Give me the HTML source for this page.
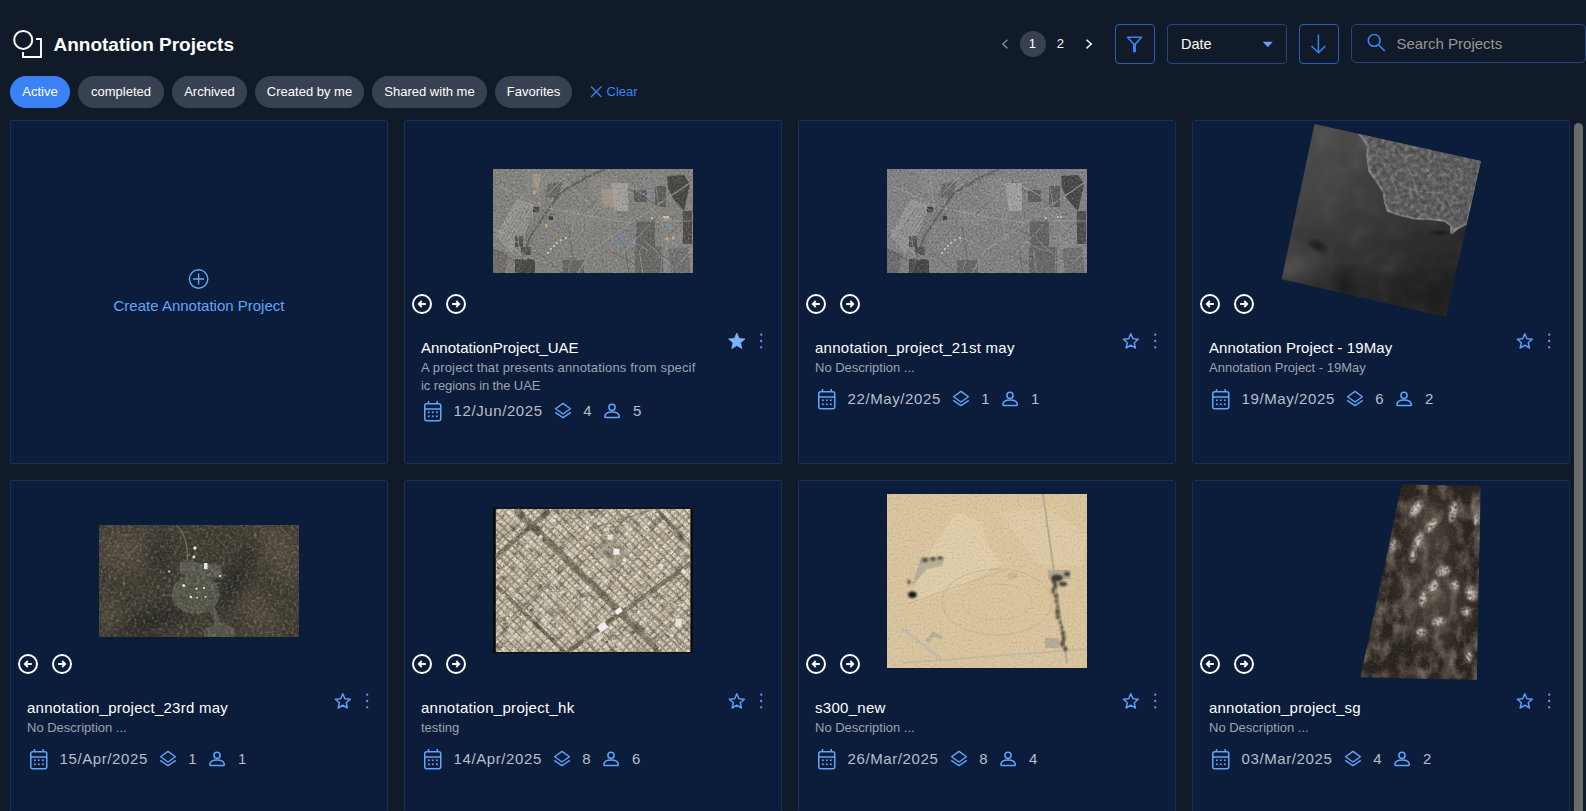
<!DOCTYPE html>
<html><head><meta charset="utf-8"><title>Annotation Projects</title>
<style>
html,body{margin:0;padding:0;}
body{width:1586px;height:811px;overflow:hidden;background:#101a28;font-family:"Liberation Sans", sans-serif;position:relative;}
</style></head><body>
<svg style="position:absolute;left:0;top:0" width="60" height="70" viewBox="0 0 60 70">
<circle cx="23.2" cy="39.9" r="9" fill="none" stroke="#fff" stroke-width="2"/>
<path d="M23 52 V57 H41 V39 H36" fill="none" stroke="#fff" stroke-width="1.9" stroke-linejoin="round"/>
</svg>
<div style="position:absolute;left:53.5px;top:34.52px;font-size:19px;line-height:19px;color:#fff;font-weight:700;letter-spacing:0px;white-space:nowrap;">Annotation Projects</div>
<div style="position:absolute;left:10px;top:76px;width:60px;height:32px;border-radius:16px;background:#3b82f6"></div>
<div style="position:absolute;left:10px;top:76px;width:60px;height:32px;"><div style="position:absolute;left:0;right:0;top:8.70px;text-align:center;font-size:13px;line-height:13px;color:#fff;white-space:nowrap">Active</div></div>
<div style="position:absolute;left:78px;top:76px;width:86px;height:32px;border-radius:16px;background:#374151"></div>
<div style="position:absolute;left:78px;top:76px;width:86px;height:32px;"><div style="position:absolute;left:0;right:0;top:8.70px;text-align:center;font-size:13px;line-height:13px;color:#fff;white-space:nowrap">completed</div></div>
<div style="position:absolute;left:172px;top:76px;width:75px;height:32px;border-radius:16px;background:#374151"></div>
<div style="position:absolute;left:172px;top:76px;width:75px;height:32px;"><div style="position:absolute;left:0;right:0;top:8.70px;text-align:center;font-size:13px;line-height:13px;color:#fff;white-space:nowrap">Archived</div></div>
<div style="position:absolute;left:255px;top:76px;width:109px;height:32px;border-radius:16px;background:#374151"></div>
<div style="position:absolute;left:255px;top:76px;width:109px;height:32px;"><div style="position:absolute;left:0;right:0;top:8.70px;text-align:center;font-size:13px;line-height:13px;color:#fff;white-space:nowrap">Created by me</div></div>
<div style="position:absolute;left:372px;top:76px;width:115px;height:32px;border-radius:16px;background:#374151"></div>
<div style="position:absolute;left:372px;top:76px;width:115px;height:32px;"><div style="position:absolute;left:0;right:0;top:8.70px;text-align:center;font-size:13px;line-height:13px;color:#fff;white-space:nowrap">Shared with me</div></div>
<div style="position:absolute;left:495px;top:76px;width:77px;height:32px;border-radius:16px;background:#374151"></div>
<div style="position:absolute;left:495px;top:76px;width:77px;height:32px;"><div style="position:absolute;left:0;right:0;top:8.70px;text-align:center;font-size:13px;line-height:13px;color:#fff;white-space:nowrap">Favorites</div></div>
<svg style="position:absolute;left:585px;top:80px" width="22" height="24" viewBox="585 80 22 24">
<path d="M591 86.5 L601.5 97 M601.5 86.5 L591 97" stroke="#3b82f6" stroke-width="1.3"/></svg>
<div style="position:absolute;left:606.5px;top:84.70px;font-size:13px;line-height:13px;color:#3b82f6;font-weight:400;letter-spacing:0px;white-space:nowrap;">Clear</div>
<div style="position:absolute;left:1020px;top:31px;width:26px;height:26px;border-radius:13px;background:#374151"></div>
<svg style="position:absolute;left:995px;top:30px" width="105" height="30" viewBox="995 30 105 30">
<path d="M1007.5 39.7 L1002.8 44 L1007.5 48.4" fill="none" stroke="#7b8190" stroke-width="1.5"/>
<path d="M1086.5 39.7 L1091.2 44 L1086.5 48.4" fill="none" stroke="#fff" stroke-width="1.5"/>
</svg>
<div style="position:absolute;left:1028.8px;top:37.40px;font-size:13px;line-height:13px;color:#fff;font-weight:400;letter-spacing:0px;white-space:nowrap;">1</div>
<div style="position:absolute;left:1056.8px;top:37.40px;font-size:13px;line-height:13px;color:#fff;font-weight:400;letter-spacing:0px;white-space:nowrap;">2</div>
<div style="position:absolute;left:1115px;top:24px;width:38px;height:38px;border:1px solid #2a5fb8;border-radius:4px"></div>
<svg style="position:absolute;left:1115px;top:24px" width="40" height="40" viewBox="1115 24 40 40">
<path d="M1127.5 37.3 H1141.5 L1134.5 45 Z" fill="none" stroke="#3b82f6" stroke-width="1.6" stroke-linejoin="round"/>
<path d="M1134.5 45 V51" stroke="#3b82f6" stroke-width="3" stroke-linecap="round"/>
</svg>
<div style="position:absolute;left:1167px;top:24px;width:118px;height:38px;border:1px solid #27477a;border-radius:4px"></div>
<div style="position:absolute;left:1181px;top:37.23px;font-size:14.5px;line-height:14.5px;color:#fff;font-weight:400;letter-spacing:0px;white-space:nowrap;">Date</div>
<svg style="position:absolute;left:1260px;top:38px" width="16" height="12" viewBox="1260 38 16 12">
<path d="M1262.8 41.8 H1272.8 L1267.8 47.2 Z" fill="#60a5fa"/></svg>
<div style="position:absolute;left:1299px;top:24px;width:38px;height:38px;border:1px solid #2a5fb8;border-radius:4px"></div>
<svg style="position:absolute;left:1299px;top:24px" width="40" height="40" viewBox="1299 24 40 40">
<path d="M1318.4 34.4 V52.5 M1311.5 46 L1318.4 52.8 L1325.3 46" fill="none" stroke="#3b82f6" stroke-width="1.5"/>
</svg>
<div style="position:absolute;left:1351px;top:24px;width:233px;height:37px;border:1px solid #27477a;border-radius:5px"></div>
<svg style="position:absolute;left:1360px;top:28px" width="32" height="30" viewBox="1360 28 32 30">
<circle cx="1374.2" cy="40.4" r="5.9" fill="none" stroke="#3b82f6" stroke-width="1.6"/>
<path d="M1378.5 44.7 L1384.8 51" stroke="#3b82f6" stroke-width="1.6"/>
</svg>
<div style="position:absolute;left:1396.4px;top:36.20px;font-size:15px;line-height:15px;color:#979797;font-weight:400;letter-spacing:0px;white-space:nowrap;">Search Projects</div>
<div style="position:absolute;left:1574px;top:123px;width:9px;height:700px;border-radius:4.5px;background:#6b6b6b"></div>
<div style="position:absolute;left:10px;top:120px;width:376px;height:342px;background:#0c1c3b;border:1px solid #1a3053;border-radius:2.5px"></div>
<svg style="position:absolute;left:180px;top:260px" width="40" height="40" viewBox="180 260 40 40">
<circle cx="198.6" cy="279" r="9.2" fill="none" stroke="#60a5fa" stroke-width="1.4"/>
<path d="M198.6 273.5 V284.5 M193.1 279 H204.1" stroke="#60a5fa" stroke-width="1.4"/></svg>
<div style="position:absolute;left:10px;width:378px;top:298.00px;text-align:center;font-size:15px;line-height:15px;color:#60a5fa;white-space:nowrap">Create Annotation Project</div>
<div style="position:absolute;left:404px;top:120px;width:376px;height:342px;background:#0c1c3b;border:1px solid #1a3053;border-radius:2.5px"></div>
<svg style="position:absolute;left:493px;top:169px" width="200" height="104" viewBox="493 169 200 104"><defs><filter id="tx493" x="0" y="0" width="100%" height="100%" color-interpolation-filters="sRGB"><feTurbulence type="fractalNoise" baseFrequency="0.5" numOctaves="2" seed="7" result="n"/><feColorMatrix in="n" type="matrix" values="0.167 0.167 0.167 0 0.250  0.167 0.167 0.167 0 0.250  0.167 0.167 0.167 0 0.250  0 0 0 0 1" result="g"/><feBlend in="g" in2="SourceGraphic" mode="hard-light" result="b"/><feComposite in="b" in2="SourceGraphic" operator="in"/></filter></defs><g filter="url(#tx493)"><rect x="493" y="169" width="200" height="104" fill="rgb(131,129,126)"/><polygon points="517.0,199.0 535.0,205.0 524.0,236.0 511.0,253.0 496.0,236.0" fill="rgb(152,150,147)" opacity="0.9"/><polygon points="591.0,178.0 617.0,178.0 617.0,220.0 593.0,209.0" fill="rgb(142,140,137)" opacity="0.6"/><polygon points="611.0,183.0 628.0,183.0 628.0,211.0 615.0,211.0" fill="rgb(167,165,162)" opacity="0.8"/><polygon points="565.0,209.0 594.0,209.0 594.0,226.0 565.0,226.0" fill="rgb(140,138,135)" opacity="0.6"/><polygon points="643.0,174.0 668.0,174.0 665.0,209.0 643.0,199.0" fill="rgb(137,135,132)" opacity="0.5"/><polygon points="665.0,224.0 693.0,224.0 693.0,273.0 663.0,273.0" fill="rgb(142,140,137)" opacity="0.5"/><polygon points="523.0,169.0 573.0,169.0 563.0,189.0 528.0,194.0" fill="rgb(142,140,137)" opacity="0.5"/><polygon points="667.0,176.0 684.0,175.0 690.0,184.0 684.0,211.0 674.0,200.0 668.0,188.0" fill="rgb(74,72,69)" opacity="1"/><polygon points="683.0,211.0 692.0,211.0 692.0,244.0 683.0,244.0" fill="rgb(80,78,75)" opacity="1"/><polygon points="655.0,186.0 666.0,186.0 666.0,207.0 655.0,207.0" fill="rgb(92,90,87)" opacity="0.9"/><polygon points="636.0,220.0 655.0,220.0 655.0,247.0 636.0,247.0" fill="rgb(97,95,92)" opacity="0.9"/><polygon points="634.0,190.0 647.0,190.0 647.0,202.0 634.0,202.0" fill="rgb(92,90,87)" opacity="0.9"/><polygon points="635.0,247.0 663.0,247.0 663.0,273.0 635.0,273.0" fill="rgb(100,98,95)" opacity="0.8"/><polygon points="515.0,236.0 523.0,236.0 523.0,247.0 515.0,247.0" fill="rgb(82,80,77)" opacity="1"/><polygon points="521.0,247.0 531.0,247.0 531.0,255.0 521.0,255.0" fill="rgb(86,84,81)" opacity="1"/><polygon points="515.0,259.0 535.0,259.0 535.0,273.0 515.0,273.0" fill="rgb(74,72,69)" opacity="1"/><polygon points="533.0,207.0 539.0,207.0 539.0,212.0 533.0,212.0" fill="rgb(62,60,57)" opacity="1"/><polygon points="549.0,216.0 553.0,216.0 553.0,220.0 549.0,220.0" fill="rgb(64,62,59)" opacity="1"/><polygon points="563.0,260.0 584.0,260.0 584.0,273.0 563.0,273.0" fill="rgb(97,95,92)" opacity="0.8"/><polygon points="493.0,249.0 508.0,254.0 505.0,273.0 493.0,273.0" fill="rgb(102,100,97)" opacity="0.7"/><polygon points="548.0,184.0 563.0,181.0 558.0,199.0 545.0,197.0" fill="rgb(97,95,92)" opacity="0.7"/><polygon points="668.0,249.0 688.0,247.0 691.0,273.0 671.0,273.0" fill="rgb(102,100,97)" opacity="0.6"/><path d="M517.0 273.0 L530.6 236.0 L546.6 212.0 L560.0 193.0 L584.0 178.6 L605.0 169.0" stroke="rgb(94,92,89)" stroke-width="2.2" fill="none" opacity="0.85"/><path d="M500.0 186.6 L546.6 208.0 L594.5 217.0 L631.0 223.0" stroke="rgb(152,150,147)" stroke-width="1.3" fill="none" opacity="0.85"/><path d="M692.0 181.6 L631.0 223.0 L591.0 251.0 L578.0 273.0" stroke="rgb(147,145,142)" stroke-width="1.5" fill="none" opacity="0.85"/><path d="M636.0 221.0 L692.0 221.0" stroke="rgb(152,150,147)" stroke-width="1.2" fill="none" opacity="0.85"/><path d="M653.0 169.0 L663.0 229.0 L661.0 273.0" stroke="rgb(142,140,137)" stroke-width="1" fill="none" opacity="0.85"/><path d="M493.0 224.0 L523.0 239.0" stroke="rgb(142,140,137)" stroke-width="1" fill="none" opacity="0.85"/><path d="M593.0 169.0 L585.0 219.0 L568.0 273.0" stroke="rgb(140,138,135)" stroke-width="1" fill="none" opacity="0.85"/><path d="M538.3 252.1 L564.0 275.1" stroke="rgb(102,100,97)" stroke-width="1" opacity="0.8"/><path d="M613.1 252.2 L639.4 266.6" stroke="rgb(102,100,97)" stroke-width="1" opacity="0.8"/><path d="M492.8 249.0 L521.6 264.9" stroke="rgb(97,95,92)" stroke-width="1" opacity="0.8"/><path d="M515.3 220.4 L521.2 259.9" stroke="rgb(152,150,147)" stroke-width="1" opacity="0.8"/><path d="M493.8 242.7 L526.1 260.5" stroke="rgb(152,150,147)" stroke-width="1" opacity="0.8"/><path d="M639.4 250.8 L644.5 284.7" stroke="rgb(152,150,147)" stroke-width="1" opacity="0.8"/><path d="M650.7 208.5 L675.3 230.7" stroke="rgb(162,160,157)" stroke-width="1" opacity="0.8"/><path d="M624.9 246.6 L629.4 276.2" stroke="rgb(97,95,92)" stroke-width="1" opacity="0.8"/><path d="M642.2 238.8 L671.6 265.3" stroke="rgb(157,155,152)" stroke-width="1" opacity="0.8"/><path d="M569.2 238.3 L592.9 251.3" stroke="rgb(152,150,147)" stroke-width="1" opacity="0.8"/><path d="M519.1 200.7 L538.7 211.4" stroke="rgb(152,150,147)" stroke-width="1" opacity="0.8"/><path d="M562.6 174.0 L581.7 191.2" stroke="rgb(102,100,97)" stroke-width="1" opacity="0.8"/><path d="M663.5 238.2 L677.2 245.7" stroke="rgb(157,155,152)" stroke-width="1" opacity="0.8"/><path d="M568.1 224.9 L573.8 262.6" stroke="rgb(97,95,92)" stroke-width="1" opacity="0.8"/><path d="M505.8 244.3 L536.9 261.4" stroke="rgb(152,150,147)" stroke-width="1" opacity="0.8"/><path d="M631.3 241.0 L648.0 250.2" stroke="rgb(152,150,147)" stroke-width="1" opacity="0.8"/><path d="M622.4 228.2 L645.7 241.0" stroke="rgb(102,100,97)" stroke-width="1" opacity="0.8"/><path d="M624.7 184.0 L650.4 198.1" stroke="rgb(162,160,157)" stroke-width="1" opacity="0.8"/><path d="M557.4 252.5 L572.3 236.9" stroke="rgb(152,150,147)" stroke-width="1" opacity="0.8"/><path d="M519.3 236.5 L532.5 243.8" stroke="rgb(102,100,97)" stroke-width="1" opacity="0.8"/><path d="M494.7 229.3 L518.9 242.6" stroke="rgb(162,160,157)" stroke-width="1" opacity="0.8"/><path d="M676.9 265.7 L697.6 244.0" stroke="rgb(162,160,157)" stroke-width="1" opacity="0.8"/><path d="M510.2 209.8 L526.4 192.8" stroke="rgb(152,150,147)" stroke-width="1" opacity="0.8"/><path d="M668.3 236.3 L693.0 210.3" stroke="rgb(97,95,92)" stroke-width="1" opacity="0.8"/><path d="M547.4 195.1 L566.5 175.1" stroke="rgb(162,160,157)" stroke-width="1" opacity="0.8"/><path d="M535.1 173.6 L540.2 207.5" stroke="rgb(157,155,152)" stroke-width="1" opacity="0.8"/><path d="M627.0 188.4 L654.3 203.4" stroke="rgb(102,100,97)" stroke-width="1" opacity="0.8"/><path d="M565.5 182.3 L590.5 204.8" stroke="rgb(162,160,157)" stroke-width="1" opacity="0.8"/><path d="M569.7 227.6 L587.5 243.6" stroke="rgb(152,150,147)" stroke-width="1" opacity="0.8"/><path d="M584.1 169.6 L586.1 182.7" stroke="rgb(97,95,92)" stroke-width="1" opacity="0.8"/><path d="M520.9 209.8 L541.3 228.2" stroke="rgb(152,150,147)" stroke-width="1" opacity="0.8"/><path d="M545.4 220.0 L556.3 208.5" stroke="rgb(97,95,92)" stroke-width="1" opacity="0.8"/><path d="M559.6 192.7 L573.8 177.8" stroke="rgb(162,160,157)" stroke-width="1" opacity="0.8"/><path d="M550.1 197.8 L552.3 212.5" stroke="rgb(157,155,152)" stroke-width="1" opacity="0.8"/><path d="M608.3 217.7 L611.8 241.6" stroke="rgb(152,150,147)" stroke-width="1" opacity="0.8"/><path d="M511.1 245.5 L526.7 259.6" stroke="rgb(162,160,157)" stroke-width="1" opacity="0.8"/><path d="M657.0 253.0 L689.9 271.1" stroke="rgb(102,100,97)" stroke-width="1" opacity="0.8"/><path d="M581.3 215.5 L596.3 199.8" stroke="rgb(102,100,97)" stroke-width="1" opacity="0.8"/><path d="M623.5 252.2 L649.8 224.5" stroke="rgb(162,160,157)" stroke-width="1" opacity="0.8"/><path d="M531.0 203.2 L533.0 216.6" stroke="rgb(162,160,157)" stroke-width="1" opacity="0.8"/><path d="M499.0 244.0 L521.0 209.0" stroke="rgb(107,105,102)" stroke-width="0.8" opacity="0.6"/><path d="M503.5 243.0 L525.5 208.0" stroke="rgb(107,105,102)" stroke-width="0.8" opacity="0.6"/><path d="M508.0 242.0 L530.0 207.0" stroke="rgb(107,105,102)" stroke-width="0.8" opacity="0.6"/><path d="M512.5 241.0 L534.5 206.0" stroke="rgb(107,105,102)" stroke-width="0.8" opacity="0.6"/><path d="M517.0 240.0 L539.0 205.0" stroke="rgb(107,105,102)" stroke-width="0.8" opacity="0.6"/><path d="M521.5 239.0 L543.5 204.0" stroke="rgb(107,105,102)" stroke-width="0.8" opacity="0.6"/><path d="M526.0 238.0 L548.0 203.0" stroke="rgb(107,105,102)" stroke-width="0.8" opacity="0.6"/><path d="M530.5 237.0 L552.5 202.0" stroke="rgb(107,105,102)" stroke-width="0.8" opacity="0.6"/></g><polygon points="601.0,189.0 618.0,189.0 615.0,207.0 603.0,205.0" fill="#b3a28a" opacity="0.55"/><polygon points="533.0,174.0 541.0,174.0 539.0,189.0 533.0,187.0" fill="#b3a28a" opacity="0.5"/><rect x="619" y="235" width="3" height="3" fill="#5d9ad8" opacity="0.6"/><rect x="622" y="239" width="4" height="3" fill="#5d9ad8" opacity="0.6"/><rect x="617" y="243" width="3" height="4" fill="#5d9ad8" opacity="0.6"/><rect x="624" y="232" width="2" height="3" fill="#5d9ad8" opacity="0.6"/><rect x="648" y="191" width="2.5" height="3" fill="#5d9ad8" opacity="0.6"/><rect x="655" y="181" width="2.5" height="3" fill="#5d9ad8" opacity="0.6"/><rect x="668" y="225" width="3" height="3" fill="#5d9ad8" opacity="0.6"/><rect x="658" y="255" width="2" height="3" fill="#5d9ad8" opacity="0.6"/><rect x="635" y="229" width="2" height="2" fill="#5d9ad8" opacity="0.6"/><rect x="553" y="209" width="2" height="2" fill="#5d9ad8" opacity="0.6"/><rect x="513" y="189" width="2" height="2" fill="#5d9ad8" opacity="0.6"/><rect x="643" y="193" width="2" height="2" fill="#5d9ad8" opacity="0.6"/><rect x="629" y="241" width="2" height="2" fill="#5d9ad8" opacity="0.6"/><rect x="664" y="216" width="2.5" height="3.5" fill="#d8b878" opacity="0.7"/><rect x="667" y="216" width="2.5" height="3.5" fill="#d8b878" opacity="0.7"/><rect x="666" y="237" width="2.5" height="3.5" fill="#d8b878" opacity="0.7"/><rect x="672" y="236" width="2.5" height="3.5" fill="#d8b878" opacity="0.7"/><rect x="533" y="191" width="2.5" height="3.5" fill="#d8b878" opacity="0.7"/><rect x="545" y="224" width="2.5" height="3.5" fill="#d8b878" opacity="0.7"/><circle cx="548" cy="253" r="1.1" fill="#d8d8d0" opacity="0.85"/><circle cx="551" cy="249" r="1.1" fill="#d8d8d0" opacity="0.85"/><circle cx="554" cy="246" r="1.1" fill="#d8d8d0" opacity="0.85"/><circle cx="557" cy="243" r="1.1" fill="#d8d8d0" opacity="0.85"/><circle cx="561" cy="240" r="1.1" fill="#d8d8d0" opacity="0.85"/><circle cx="566" cy="238" r="1.1" fill="#d8d8d0" opacity="0.85"/><circle cx="652" cy="218" r="1.1" fill="#d8d8d0" opacity="0.85"/><circle cx="664" cy="217" r="1.1" fill="#d8d8d0" opacity="0.85"/><circle cx="667" cy="217" r="1.1" fill="#d8d8d0" opacity="0.85"/></svg>
<svg style="position:absolute;left:404px;top:290px" width="70" height="30" viewBox="404 290 70 30">
<circle cx="422" cy="304" r="9" fill="none" stroke="#fff" stroke-width="2"/>
<path d="M425.8 304 H418.8 M421.8 301 L418.8 304 L421.8 307" fill="none" stroke="#fff" stroke-width="1.8"/>
<circle cx="456" cy="304" r="9" fill="none" stroke="#fff" stroke-width="2"/>
<path d="M452.2 304 H459.2 M456.2 301 L459.2 304 L456.2 307" fill="none" stroke="#fff" stroke-width="1.8"/>
</svg>
<svg style="position:absolute;left:724px;top:325px" width="50" height="32" viewBox="724 325 50 32"><path d="M736.80 333.00 L739.09 338.44 L744.98 338.94 L740.51 342.81 L741.85 348.56 L736.80 345.50 L731.75 348.56 L733.09 342.81 L728.62 338.94 L734.51 338.44 Z" fill="#7cb3f7" stroke="#7cb3f7" stroke-width="0.8" stroke-linejoin="round"/><circle cx="761.2" cy="334.7" r="1.15" fill="#5c9cf5"/><circle cx="761.2" cy="341" r="1.15" fill="#5c9cf5"/><circle cx="761.2" cy="347.3" r="1.15" fill="#5c9cf5"/></svg>
<div style="position:absolute;left:421px;top:339.70px;font-size:15px;line-height:15px;color:#fff;font-weight:400;letter-spacing:0px;white-space:nowrap;">AnnotationProject_UAE</div>
<div style="position:absolute;left:421px;top:360.60px;font-size:13px;line-height:13px;color:#9ca3af;font-weight:400;letter-spacing:0.15px;white-space:nowrap;">A project that presents annotations from specif</div>
<div style="position:absolute;left:421px;top:378.60px;font-size:13px;line-height:13px;color:#9ca3af;font-weight:400;letter-spacing:-0.1px;white-space:nowrap;">ic regions in the UAE</div>
<svg style="position:absolute;left:419px;top:397px" width="30" height="26" viewBox="419 397 30 26">
<rect x="424.75" y="403.75" width="16" height="17" rx="2" fill="none" stroke="#60a5fa" stroke-width="1.5"/>
<path d="M424.75 409 H440.75 M428.5 401 V404 M437.2 401 V404" stroke="#60a5fa" stroke-width="1.5"/>
<rect x="428" y="411.4" width="1.7" height="1.7" fill="#60a5fa"/><rect x="428" y="415.4" width="1.7" height="1.7" fill="#60a5fa"/><rect x="431.9" y="411.4" width="1.7" height="1.7" fill="#60a5fa"/><rect x="431.9" y="415.4" width="1.7" height="1.7" fill="#60a5fa"/><rect x="436" y="411.4" width="1.7" height="1.7" fill="#60a5fa"/><rect x="436" y="415.4" width="1.7" height="1.7" fill="#60a5fa"/></svg>
<div style="position:absolute;left:453.5px;top:403.30px;font-size:15px;line-height:15px;color:#b8bfca;font-weight:400;letter-spacing:0.6px;white-space:nowrap;">12/Jun/2025</div>
<svg style="position:absolute;left:552.0px;top:400px" width="22" height="24" viewBox="552.0 400 22 24">
<path d="M563.0 403.4 L570.4 408.7 L563.0 414 L555.6 408.7 Z" fill="none" stroke="#60a5fa" stroke-width="1.4" stroke-linejoin="round"/>
<path d="M555.2 412.3 L563.0 417.7 L570.8 412.3" fill="none" stroke="#60a5fa" stroke-width="1.4" stroke-linejoin="round"/>
</svg>
<div style="position:absolute;left:583.2px;top:403.30px;font-size:15px;line-height:15px;color:#b8bfca;font-weight:400;letter-spacing:0px;white-space:nowrap;">4</div>
<svg style="position:absolute;left:602.1000000000001px;top:401px" width="22" height="22" viewBox="602.1000000000001 401 22 22">
<circle cx="612.1000000000001" cy="407.3" r="3.1" fill="none" stroke="#60a5fa" stroke-width="1.5"/>
<path d="M605.0000000000001 416.8 C605.0000000000001 413.4 608.1000000000001 412 612.1000000000001 412 C616.1000000000001 412 619.4000000000001 413.4 619.4000000000001 416.8 Q619.4000000000001 417.6 618.6000000000001 417.6 H605.8000000000002 Q605.0000000000001 417.6 605.0000000000001 416.8 Z" fill="none" stroke="#60a5fa" stroke-width="1.5"/>
</svg>
<div style="position:absolute;left:632.9000000000001px;top:403.30px;font-size:15px;line-height:15px;color:#b8bfca;font-weight:400;letter-spacing:0px;white-space:nowrap;">5</div>
<div style="position:absolute;left:798px;top:120px;width:376px;height:342px;background:#0c1c3b;border:1px solid #1a3053;border-radius:2.5px"></div>
<svg style="position:absolute;left:887px;top:169px" width="200" height="104" viewBox="887 169 200 104"><defs><filter id="tx887" x="0" y="0" width="100%" height="100%" color-interpolation-filters="sRGB"><feTurbulence type="fractalNoise" baseFrequency="0.5" numOctaves="2" seed="7" result="n"/><feColorMatrix in="n" type="matrix" values="0.167 0.167 0.167 0 0.250  0.167 0.167 0.167 0 0.250  0.167 0.167 0.167 0 0.250  0 0 0 0 1" result="g"/><feBlend in="g" in2="SourceGraphic" mode="hard-light" result="b"/><feComposite in="b" in2="SourceGraphic" operator="in"/></filter></defs><g filter="url(#tx887)"><rect x="887" y="169" width="200" height="104" fill="rgb(129,129,129)"/><polygon points="911.0,199.0 929.0,205.0 918.0,236.0 905.0,253.0 890.0,236.0" fill="rgb(150,150,150)" opacity="0.9"/><polygon points="985.0,178.0 1011.0,178.0 1011.0,220.0 987.0,209.0" fill="rgb(140,140,140)" opacity="0.6"/><polygon points="1005.0,183.0 1022.0,183.0 1022.0,211.0 1009.0,211.0" fill="rgb(165,165,165)" opacity="0.8"/><polygon points="959.0,209.0 988.0,209.0 988.0,226.0 959.0,226.0" fill="rgb(138,138,138)" opacity="0.6"/><polygon points="1037.0,174.0 1062.0,174.0 1059.0,209.0 1037.0,199.0" fill="rgb(135,135,135)" opacity="0.5"/><polygon points="1059.0,224.0 1087.0,224.0 1087.0,273.0 1057.0,273.0" fill="rgb(140,140,140)" opacity="0.5"/><polygon points="917.0,169.0 967.0,169.0 957.0,189.0 922.0,194.0" fill="rgb(140,140,140)" opacity="0.5"/><polygon points="1061.0,176.0 1078.0,175.0 1084.0,184.0 1078.0,211.0 1068.0,200.0 1062.0,188.0" fill="rgb(72,72,72)" opacity="1"/><polygon points="1077.0,211.0 1086.0,211.0 1086.0,244.0 1077.0,244.0" fill="rgb(78,78,78)" opacity="1"/><polygon points="1049.0,186.0 1060.0,186.0 1060.0,207.0 1049.0,207.0" fill="rgb(90,90,90)" opacity="0.9"/><polygon points="1030.0,220.0 1049.0,220.0 1049.0,247.0 1030.0,247.0" fill="rgb(95,95,95)" opacity="0.9"/><polygon points="1028.0,190.0 1041.0,190.0 1041.0,202.0 1028.0,202.0" fill="rgb(90,90,90)" opacity="0.9"/><polygon points="1029.0,247.0 1057.0,247.0 1057.0,273.0 1029.0,273.0" fill="rgb(98,98,98)" opacity="0.8"/><polygon points="909.0,236.0 917.0,236.0 917.0,247.0 909.0,247.0" fill="rgb(80,80,80)" opacity="1"/><polygon points="915.0,247.0 925.0,247.0 925.0,255.0 915.0,255.0" fill="rgb(84,84,84)" opacity="1"/><polygon points="909.0,259.0 929.0,259.0 929.0,273.0 909.0,273.0" fill="rgb(72,72,72)" opacity="1"/><polygon points="927.0,207.0 933.0,207.0 933.0,212.0 927.0,212.0" fill="rgb(60,60,60)" opacity="1"/><polygon points="943.0,216.0 947.0,216.0 947.0,220.0 943.0,220.0" fill="rgb(62,62,62)" opacity="1"/><polygon points="957.0,260.0 978.0,260.0 978.0,273.0 957.0,273.0" fill="rgb(95,95,95)" opacity="0.8"/><polygon points="887.0,249.0 902.0,254.0 899.0,273.0 887.0,273.0" fill="rgb(100,100,100)" opacity="0.7"/><polygon points="942.0,184.0 957.0,181.0 952.0,199.0 939.0,197.0" fill="rgb(95,95,95)" opacity="0.7"/><polygon points="1062.0,249.0 1082.0,247.0 1085.0,273.0 1065.0,273.0" fill="rgb(100,100,100)" opacity="0.6"/><path d="M911.0 273.0 L924.6 236.0 L940.6 212.0 L954.0 193.0 L978.0 178.6 L999.0 169.0" stroke="rgb(92,92,92)" stroke-width="2.2" fill="none" opacity="0.85"/><path d="M894.0 186.6 L940.6 208.0 L988.5 217.0 L1025.0 223.0" stroke="rgb(150,150,150)" stroke-width="1.3" fill="none" opacity="0.85"/><path d="M1086.0 181.6 L1025.0 223.0 L985.0 251.0 L972.0 273.0" stroke="rgb(145,145,145)" stroke-width="1.5" fill="none" opacity="0.85"/><path d="M1030.0 221.0 L1086.0 221.0" stroke="rgb(150,150,150)" stroke-width="1.2" fill="none" opacity="0.85"/><path d="M1047.0 169.0 L1057.0 229.0 L1055.0 273.0" stroke="rgb(140,140,140)" stroke-width="1" fill="none" opacity="0.85"/><path d="M887.0 224.0 L917.0 239.0" stroke="rgb(140,140,140)" stroke-width="1" fill="none" opacity="0.85"/><path d="M987.0 169.0 L979.0 219.0 L962.0 273.0" stroke="rgb(138,138,138)" stroke-width="1" fill="none" opacity="0.85"/><path d="M932.3 252.1 L958.0 275.1" stroke="rgb(100,100,100)" stroke-width="1" opacity="0.8"/><path d="M1007.1 252.2 L1033.4 266.6" stroke="rgb(100,100,100)" stroke-width="1" opacity="0.8"/><path d="M886.8 249.0 L915.6 264.9" stroke="rgb(95,95,95)" stroke-width="1" opacity="0.8"/><path d="M909.3 220.4 L915.2 259.9" stroke="rgb(150,150,150)" stroke-width="1" opacity="0.8"/><path d="M887.8 242.7 L920.1 260.5" stroke="rgb(150,150,150)" stroke-width="1" opacity="0.8"/><path d="M1033.4 250.8 L1038.5 284.7" stroke="rgb(150,150,150)" stroke-width="1" opacity="0.8"/><path d="M1044.7 208.5 L1069.3 230.7" stroke="rgb(160,160,160)" stroke-width="1" opacity="0.8"/><path d="M1018.9 246.6 L1023.4 276.2" stroke="rgb(95,95,95)" stroke-width="1" opacity="0.8"/><path d="M1036.2 238.8 L1065.6 265.3" stroke="rgb(155,155,155)" stroke-width="1" opacity="0.8"/><path d="M963.2 238.3 L986.9 251.3" stroke="rgb(150,150,150)" stroke-width="1" opacity="0.8"/><path d="M913.1 200.7 L932.7 211.4" stroke="rgb(150,150,150)" stroke-width="1" opacity="0.8"/><path d="M956.6 174.0 L975.7 191.2" stroke="rgb(100,100,100)" stroke-width="1" opacity="0.8"/><path d="M1057.5 238.2 L1071.2 245.7" stroke="rgb(155,155,155)" stroke-width="1" opacity="0.8"/><path d="M962.1 224.9 L967.8 262.6" stroke="rgb(95,95,95)" stroke-width="1" opacity="0.8"/><path d="M899.8 244.3 L930.9 261.4" stroke="rgb(150,150,150)" stroke-width="1" opacity="0.8"/><path d="M1025.3 241.0 L1042.0 250.2" stroke="rgb(150,150,150)" stroke-width="1" opacity="0.8"/><path d="M1016.4 228.2 L1039.7 241.0" stroke="rgb(100,100,100)" stroke-width="1" opacity="0.8"/><path d="M1018.7 184.0 L1044.4 198.1" stroke="rgb(160,160,160)" stroke-width="1" opacity="0.8"/><path d="M951.4 252.5 L966.3 236.9" stroke="rgb(150,150,150)" stroke-width="1" opacity="0.8"/><path d="M913.3 236.5 L926.5 243.8" stroke="rgb(100,100,100)" stroke-width="1" opacity="0.8"/><path d="M888.7 229.3 L912.9 242.6" stroke="rgb(160,160,160)" stroke-width="1" opacity="0.8"/><path d="M1070.9 265.7 L1091.6 244.0" stroke="rgb(160,160,160)" stroke-width="1" opacity="0.8"/><path d="M904.2 209.8 L920.4 192.8" stroke="rgb(150,150,150)" stroke-width="1" opacity="0.8"/><path d="M1062.3 236.3 L1087.0 210.3" stroke="rgb(95,95,95)" stroke-width="1" opacity="0.8"/><path d="M941.4 195.1 L960.5 175.1" stroke="rgb(160,160,160)" stroke-width="1" opacity="0.8"/><path d="M929.1 173.6 L934.2 207.5" stroke="rgb(155,155,155)" stroke-width="1" opacity="0.8"/><path d="M1021.0 188.4 L1048.3 203.4" stroke="rgb(100,100,100)" stroke-width="1" opacity="0.8"/><path d="M959.5 182.3 L984.5 204.8" stroke="rgb(160,160,160)" stroke-width="1" opacity="0.8"/><path d="M963.7 227.6 L981.5 243.6" stroke="rgb(150,150,150)" stroke-width="1" opacity="0.8"/><path d="M978.1 169.6 L980.1 182.7" stroke="rgb(95,95,95)" stroke-width="1" opacity="0.8"/><path d="M914.9 209.8 L935.3 228.2" stroke="rgb(150,150,150)" stroke-width="1" opacity="0.8"/><path d="M939.4 220.0 L950.3 208.5" stroke="rgb(95,95,95)" stroke-width="1" opacity="0.8"/><path d="M953.6 192.7 L967.8 177.8" stroke="rgb(160,160,160)" stroke-width="1" opacity="0.8"/><path d="M944.1 197.8 L946.3 212.5" stroke="rgb(155,155,155)" stroke-width="1" opacity="0.8"/><path d="M1002.3 217.7 L1005.8 241.6" stroke="rgb(150,150,150)" stroke-width="1" opacity="0.8"/><path d="M905.1 245.5 L920.7 259.6" stroke="rgb(160,160,160)" stroke-width="1" opacity="0.8"/><path d="M1051.0 253.0 L1083.9 271.1" stroke="rgb(100,100,100)" stroke-width="1" opacity="0.8"/><path d="M975.3 215.5 L990.3 199.8" stroke="rgb(100,100,100)" stroke-width="1" opacity="0.8"/><path d="M1017.5 252.2 L1043.8 224.5" stroke="rgb(160,160,160)" stroke-width="1" opacity="0.8"/><path d="M925.0 203.2 L927.0 216.6" stroke="rgb(160,160,160)" stroke-width="1" opacity="0.8"/><path d="M893.0 244.0 L915.0 209.0" stroke="rgb(105,105,105)" stroke-width="0.8" opacity="0.6"/><path d="M897.5 243.0 L919.5 208.0" stroke="rgb(105,105,105)" stroke-width="0.8" opacity="0.6"/><path d="M902.0 242.0 L924.0 207.0" stroke="rgb(105,105,105)" stroke-width="0.8" opacity="0.6"/><path d="M906.5 241.0 L928.5 206.0" stroke="rgb(105,105,105)" stroke-width="0.8" opacity="0.6"/><path d="M911.0 240.0 L933.0 205.0" stroke="rgb(105,105,105)" stroke-width="0.8" opacity="0.6"/><path d="M915.5 239.0 L937.5 204.0" stroke="rgb(105,105,105)" stroke-width="0.8" opacity="0.6"/><path d="M920.0 238.0 L942.0 203.0" stroke="rgb(105,105,105)" stroke-width="0.8" opacity="0.6"/><path d="M924.5 237.0 L946.5 202.0" stroke="rgb(105,105,105)" stroke-width="0.8" opacity="0.6"/></g><circle cx="942" cy="253" r="1.1" fill="#d8d8d0" opacity="0.85"/><circle cx="945" cy="249" r="1.1" fill="#d8d8d0" opacity="0.85"/><circle cx="948" cy="246" r="1.1" fill="#d8d8d0" opacity="0.85"/><circle cx="951" cy="243" r="1.1" fill="#d8d8d0" opacity="0.85"/><circle cx="955" cy="240" r="1.1" fill="#d8d8d0" opacity="0.85"/><circle cx="960" cy="238" r="1.1" fill="#d8d8d0" opacity="0.85"/><circle cx="1046" cy="218" r="1.1" fill="#d8d8d0" opacity="0.85"/><circle cx="1058" cy="217" r="1.1" fill="#d8d8d0" opacity="0.85"/><circle cx="1061" cy="217" r="1.1" fill="#d8d8d0" opacity="0.85"/></svg>
<svg style="position:absolute;left:798px;top:290px" width="70" height="30" viewBox="798 290 70 30">
<circle cx="816" cy="304" r="9" fill="none" stroke="#fff" stroke-width="2"/>
<path d="M819.8 304 H812.8 M815.8 301 L812.8 304 L815.8 307" fill="none" stroke="#fff" stroke-width="1.8"/>
<circle cx="850" cy="304" r="9" fill="none" stroke="#fff" stroke-width="2"/>
<path d="M846.2 304 H853.2 M850.2 301 L853.2 304 L850.2 307" fill="none" stroke="#fff" stroke-width="1.8"/>
</svg>
<svg style="position:absolute;left:1118px;top:325px" width="50" height="32" viewBox="1118 325 50 32"><path d="M1130.80 333.70 L1132.92 338.69 L1138.31 339.16 L1134.22 342.71 L1135.44 347.99 L1130.80 345.20 L1126.16 347.99 L1127.38 342.71 L1123.29 339.16 L1128.68 338.69 Z" fill="none" stroke="#5c9cf5" stroke-width="1.5" stroke-linejoin="round"/><circle cx="1155.2" cy="334.7" r="1.15" fill="#5c9cf5"/><circle cx="1155.2" cy="341" r="1.15" fill="#5c9cf5"/><circle cx="1155.2" cy="347.3" r="1.15" fill="#5c9cf5"/></svg>
<div style="position:absolute;left:815px;top:339.70px;font-size:15px;line-height:15px;color:#fff;font-weight:400;letter-spacing:0.26px;white-space:nowrap;">annotation_project_21st may</div>
<div style="position:absolute;left:815px;top:360.60px;font-size:13px;line-height:13px;color:#9ca3af;font-weight:400;letter-spacing:0px;white-space:nowrap;">No Description ...</div>
<svg style="position:absolute;left:813px;top:385px" width="30" height="26" viewBox="813 385 30 26">
<rect x="818.75" y="391.75" width="16" height="17" rx="2" fill="none" stroke="#60a5fa" stroke-width="1.5"/>
<path d="M818.75 397 H834.75 M822.5 389 V392 M831.2 389 V392" stroke="#60a5fa" stroke-width="1.5"/>
<rect x="822" y="399.4" width="1.7" height="1.7" fill="#60a5fa"/><rect x="822" y="403.4" width="1.7" height="1.7" fill="#60a5fa"/><rect x="825.9" y="399.4" width="1.7" height="1.7" fill="#60a5fa"/><rect x="825.9" y="403.4" width="1.7" height="1.7" fill="#60a5fa"/><rect x="830" y="399.4" width="1.7" height="1.7" fill="#60a5fa"/><rect x="830" y="403.4" width="1.7" height="1.7" fill="#60a5fa"/></svg>
<div style="position:absolute;left:847.5px;top:391.30px;font-size:15px;line-height:15px;color:#b8bfca;font-weight:400;letter-spacing:0.6px;white-space:nowrap;">22/May/2025</div>
<svg style="position:absolute;left:950.0px;top:388px" width="22" height="24" viewBox="950.0 388 22 24">
<path d="M961.0 391.4 L968.4 396.7 L961.0 402 L953.6 396.7 Z" fill="none" stroke="#60a5fa" stroke-width="1.4" stroke-linejoin="round"/>
<path d="M953.2 400.3 L961.0 405.7 L968.8 400.3" fill="none" stroke="#60a5fa" stroke-width="1.4" stroke-linejoin="round"/>
</svg>
<div style="position:absolute;left:981.2px;top:391.30px;font-size:15px;line-height:15px;color:#b8bfca;font-weight:400;letter-spacing:0px;white-space:nowrap;">1</div>
<svg style="position:absolute;left:1000.1000000000001px;top:389px" width="22" height="22" viewBox="1000.1000000000001 389 22 22">
<circle cx="1010.1000000000001" cy="395.3" r="3.1" fill="none" stroke="#60a5fa" stroke-width="1.5"/>
<path d="M1003.0000000000001 404.8 C1003.0000000000001 401.4 1006.1000000000001 400 1010.1000000000001 400 C1014.1000000000001 400 1017.4000000000001 401.4 1017.4000000000001 404.8 Q1017.4000000000001 405.6 1016.6000000000001 405.6 H1003.8000000000002 Q1003.0000000000001 405.6 1003.0000000000001 404.8 Z" fill="none" stroke="#60a5fa" stroke-width="1.5"/>
</svg>
<div style="position:absolute;left:1030.9px;top:391.30px;font-size:15px;line-height:15px;color:#b8bfca;font-weight:400;letter-spacing:0px;white-space:nowrap;">1</div>
<div style="position:absolute;left:1192px;top:120px;width:376px;height:342px;background:#0c1c3b;border:1px solid #1a3053;border-radius:2.5px"></div>
<svg style="position:absolute;left:1278px;top:120px" width="206" height="200" viewBox="1278 120 206 200"><defs><clipPath id="q4"><polygon points="1314.5,124.1 1480.9,161.1 1446,316.9 1281.6,279.3"/></clipPath><linearGradient id="sea4" gradientUnits="userSpaceOnUse" x1="1310" y1="130" x2="1390" y2="310"><stop offset="0" stop-color="#4f4f4f"/><stop offset="0.45" stop-color="#3d3d3d"/><stop offset="1" stop-color="#232323"/></linearGradient><radialGradient id="sb4" cx="0.5" cy="0.5" r="0.5"><stop offset="0" stop-color="#4a4a4a"/><stop offset="1" stop-color="#4a4a4a" stop-opacity="0"/></radialGradient><radialGradient id="sd4" cx="0.5" cy="0.5" r="0.5"><stop offset="0" stop-color="#1c1c1c"/><stop offset="1" stop-color="#1c1c1c" stop-opacity="0"/></radialGradient><filter id="tx4" x="0" y="0" width="100%" height="100%" color-interpolation-filters="sRGB"><feTurbulence type="fractalNoise" baseFrequency="0.22" numOctaves="4" seed="11" result="n"/><feColorMatrix in="n" type="matrix" values="0.183 0.183 0.183 0 0.225  0.183 0.183 0.183 0 0.225  0.183 0.183 0.183 0 0.225  0 0 0 0 1" result="g"/><feBlend in="g" in2="SourceGraphic" mode="hard-light" result="b"/><feComposite in="b" in2="SourceGraphic" operator="in"/></filter><filter id="tx4b" x="0" y="0" width="100%" height="100%" color-interpolation-filters="sRGB"><feTurbulence type="fractalNoise" baseFrequency="0.04" numOctaves="2" seed="3" result="n"/><feColorMatrix in="n" type="matrix" values="0.050 0.050 0.050 0 0.425  0.050 0.050 0.050 0 0.425  0.050 0.050 0.050 0 0.425  0 0 0 0 1" result="g"/><feBlend in="g" in2="SourceGraphic" mode="hard-light" result="b"/><feComposite in="b" in2="SourceGraphic" operator="in"/></filter></defs><g clip-path="url(#q4)"><g filter="url(#tx4b)"><rect x="1278" y="120" width="206" height="200" fill="url(#sea4)"/><ellipse cx="1300" cy="265" rx="28" ry="24" fill="url(#sb4)"/><ellipse cx="1320" cy="180" rx="30" ry="50" fill="url(#sb4)" opacity="0.7"/><ellipse cx="1318" cy="246" rx="13" ry="7" fill="url(#sd4)" transform="rotate(25 1318 246)"/><ellipse cx="1345" cy="285" rx="16" ry="30" fill="url(#sd4)" opacity="0.8"/><ellipse cx="1430" cy="290" rx="45" ry="30" fill="url(#sd4)" opacity="0.6"/></g><g filter="url(#tx4)"><polygon points="1358,133.6 1362,137 1365,142 1368.3,146 1367,155 1369.6,171.9 1376,180 1383.9,192.6 1385,202 1387.8,210.8 1400,215 1414.9,218.5 1430,219 1445,221 1451.2,226 1451.2,234 1458,228 1466.7,223.7 1482,160" fill="#5d5d5d"/><polyline points="1358,133.6 1362,137 1365,142 1368.3,146 1367,155 1369.6,171.9 1376,180 1383.9,192.6 1385,202 1387.8,210.8 1400,215 1414.9,218.5 1430,219 1445,221 1451.2,226 1451.2,234 1458,228 1466.7,223.7 1482,160" fill="none" stroke="#787878" stroke-width="2.2"/><path d="M1375 150 Q1390 170 1400 200 M1395 145 Q1415 175 1420 205 M1420 160 Q1440 185 1455 215 M1440 170 Q1455 180 1470 200 M1400 185 Q1420 195 1445 192" stroke="#777" stroke-width="1.1" fill="none" opacity="0.8"/><path d="M1385 165 Q1405 180 1410 210 M1430 150 Q1445 170 1440 200 M1455 165 Q1465 190 1460 220" stroke="#4e4e4e" stroke-width="1" fill="none" opacity="0.7"/></g><ellipse cx="1440" cy="233" rx="13" ry="4" fill="url(#sd4)"/></g></svg>
<svg style="position:absolute;left:1192px;top:290px" width="70" height="30" viewBox="1192 290 70 30">
<circle cx="1210" cy="304" r="9" fill="none" stroke="#fff" stroke-width="2"/>
<path d="M1213.8 304 H1206.8 M1209.8 301 L1206.8 304 L1209.8 307" fill="none" stroke="#fff" stroke-width="1.8"/>
<circle cx="1244" cy="304" r="9" fill="none" stroke="#fff" stroke-width="2"/>
<path d="M1240.2 304 H1247.2 M1244.2 301 L1247.2 304 L1244.2 307" fill="none" stroke="#fff" stroke-width="1.8"/>
</svg>
<svg style="position:absolute;left:1512px;top:325px" width="50" height="32" viewBox="1512 325 50 32"><path d="M1524.80 333.70 L1526.92 338.69 L1532.31 339.16 L1528.22 342.71 L1529.44 347.99 L1524.80 345.20 L1520.16 347.99 L1521.38 342.71 L1517.29 339.16 L1522.68 338.69 Z" fill="none" stroke="#5c9cf5" stroke-width="1.5" stroke-linejoin="round"/><circle cx="1549.2" cy="334.7" r="1.15" fill="#5c9cf5"/><circle cx="1549.2" cy="341" r="1.15" fill="#5c9cf5"/><circle cx="1549.2" cy="347.3" r="1.15" fill="#5c9cf5"/></svg>
<div style="position:absolute;left:1209px;top:339.70px;font-size:15px;line-height:15px;color:#fff;font-weight:400;letter-spacing:0.09px;white-space:nowrap;">Annotation Project - 19May</div>
<div style="position:absolute;left:1209px;top:360.60px;font-size:13px;line-height:13px;color:#9ca3af;font-weight:400;letter-spacing:0px;white-space:nowrap;">Annotation Project - 19May</div>
<svg style="position:absolute;left:1207px;top:385px" width="30" height="26" viewBox="1207 385 30 26">
<rect x="1212.75" y="391.75" width="16" height="17" rx="2" fill="none" stroke="#60a5fa" stroke-width="1.5"/>
<path d="M1212.75 397 H1228.75 M1216.5 389 V392 M1225.2 389 V392" stroke="#60a5fa" stroke-width="1.5"/>
<rect x="1216" y="399.4" width="1.7" height="1.7" fill="#60a5fa"/><rect x="1216" y="403.4" width="1.7" height="1.7" fill="#60a5fa"/><rect x="1219.9" y="399.4" width="1.7" height="1.7" fill="#60a5fa"/><rect x="1219.9" y="403.4" width="1.7" height="1.7" fill="#60a5fa"/><rect x="1224" y="399.4" width="1.7" height="1.7" fill="#60a5fa"/><rect x="1224" y="403.4" width="1.7" height="1.7" fill="#60a5fa"/></svg>
<div style="position:absolute;left:1241.5px;top:391.30px;font-size:15px;line-height:15px;color:#b8bfca;font-weight:400;letter-spacing:0.6px;white-space:nowrap;">19/May/2025</div>
<svg style="position:absolute;left:1344.0px;top:388px" width="22" height="24" viewBox="1344.0 388 22 24">
<path d="M1355.0 391.4 L1362.4 396.7 L1355.0 402 L1347.6 396.7 Z" fill="none" stroke="#60a5fa" stroke-width="1.4" stroke-linejoin="round"/>
<path d="M1347.2 400.3 L1355.0 405.7 L1362.8 400.3" fill="none" stroke="#60a5fa" stroke-width="1.4" stroke-linejoin="round"/>
</svg>
<div style="position:absolute;left:1375.2px;top:391.30px;font-size:15px;line-height:15px;color:#b8bfca;font-weight:400;letter-spacing:0px;white-space:nowrap;">6</div>
<svg style="position:absolute;left:1394.1000000000001px;top:389px" width="22" height="22" viewBox="1394.1000000000001 389 22 22">
<circle cx="1404.1000000000001" cy="395.3" r="3.1" fill="none" stroke="#60a5fa" stroke-width="1.5"/>
<path d="M1397.0000000000002 404.8 C1397.0000000000002 401.4 1400.1000000000001 400 1404.1000000000001 400 C1408.1000000000001 400 1411.4 401.4 1411.4 404.8 Q1411.4 405.6 1410.6000000000001 405.6 H1397.8000000000002 Q1397.0000000000002 405.6 1397.0000000000002 404.8 Z" fill="none" stroke="#60a5fa" stroke-width="1.5"/>
</svg>
<div style="position:absolute;left:1424.9px;top:391.30px;font-size:15px;line-height:15px;color:#b8bfca;font-weight:400;letter-spacing:0px;white-space:nowrap;">2</div>
<div style="position:absolute;left:10px;top:480px;width:376px;height:330px;background:#0c1c3b;border:1px solid #1a3053;border-radius:2.5px"></div>
<svg style="position:absolute;left:99px;top:525px" width="200" height="112" viewBox="99 525 200 112"><defs><filter id="tx5" x="0" y="0" width="100%" height="100%" color-interpolation-filters="sRGB"><feTurbulence type="fractalNoise" baseFrequency="0.35" numOctaves="3" seed="5" result="n"/><feColorMatrix in="n" type="matrix" values="0.167 0.167 0.167 0 0.250  0.167 0.167 0.167 0 0.250  0.167 0.167 0.167 0 0.250  0 0 0 0 1" result="g"/><feBlend in="g" in2="SourceGraphic" mode="hard-light" result="b"/><feComposite in="b" in2="SourceGraphic" operator="in"/></filter><radialGradient id="fl5" cx="0.5" cy="0.5" r="0.5"><stop offset="0" stop-color="#574f42"/><stop offset="1" stop-color="#574f42" stop-opacity="0"/></radialGradient><radialGradient id="fd5" cx="0.5" cy="0.5" r="0.5"><stop offset="0" stop-color="#2c2c27"/><stop offset="1" stop-color="#2c2c27" stop-opacity="0"/></radialGradient></defs><g filter="url(#tx5)"><rect x="99" y="525" width="200" height="112" fill="#413d33"/><ellipse cx="124" cy="550" rx="45" ry="35" fill="url(#fl5)" opacity="1" transform="rotate(0 124 550)"/><ellipse cx="279" cy="550" rx="30" ry="50" fill="url(#fl5)" opacity="1" transform="rotate(-30 279 550)"/><ellipse cx="259" cy="615" rx="25" ry="40" fill="url(#fl5)" opacity="0.8" transform="rotate(-35 259 615)"/><ellipse cx="109" cy="615" rx="20" ry="30" fill="url(#fl5)" opacity="0.7" transform="rotate(0 109 615)"/><ellipse cx="154" cy="620" rx="60" ry="22" fill="url(#fd5)" opacity="1" transform="rotate(-25 154 620)"/><ellipse cx="234" cy="580" rx="18" ry="55" fill="url(#fd5)" opacity="1" transform="rotate(30 234 580)"/><ellipse cx="159" cy="555" rx="20" ry="30" fill="url(#fd5)" opacity="0.7" transform="rotate(0 159 555)"/><polygon points="180,562 196,562 197,575 180,574" fill="#5c5c58"/><polygon points="196,563 221,565 223,579 197,575" fill="#5a5b52"/><ellipse cx="195.7" cy="594" rx="24" ry="20" fill="#56574b"/><ellipse cx="195.7" cy="594" rx="19" ry="15" fill="none" stroke="#626355" stroke-width="0.8"/><ellipse cx="219.7" cy="633" rx="16" ry="9" fill="#56574b"/><path d="M211 605 Q217 620 220 629" stroke="#56574b" stroke-width="6" fill="none"/><path d="M176.5 525.5 Q188 535 187.7 561.6" stroke="#6b6a62" stroke-width="1.3" fill="none"/></g><circle cx="194.9" cy="548" r="1.8" fill="#e8e4da"/><circle cx="193.8" cy="557" r="1.5" fill="#e8e4da"/><circle cx="183.7" cy="585.6" r="1.5" fill="#e8e4da"/><circle cx="196.5" cy="588.8" r="1.1" fill="#e8e4da"/><circle cx="204" cy="588" r="1.1" fill="#e8e4da"/><circle cx="190.9" cy="597" r="1.3" fill="#e8e4da"/><circle cx="197.3" cy="597.6" r="0.9" fill="#e8e4da"/><circle cx="205.3" cy="596.8" r="0.9" fill="#e8e4da"/><circle cx="169.2" cy="571.5" r="1.1" fill="#e8e4da"/><circle cx="220" cy="576" r="1.1" fill="#e8e4da"/><rect x="204" y="563" width="3.5" height="6" fill="#e8e4da"/></svg>
<svg style="position:absolute;left:10px;top:650px" width="70" height="30" viewBox="10 650 70 30">
<circle cx="28" cy="664" r="9" fill="none" stroke="#fff" stroke-width="2"/>
<path d="M31.8 664 H24.8 M27.8 661 L24.8 664 L27.8 667" fill="none" stroke="#fff" stroke-width="1.8"/>
<circle cx="62" cy="664" r="9" fill="none" stroke="#fff" stroke-width="2"/>
<path d="M58.2 664 H65.2 M62.2 661 L65.2 664 L62.2 667" fill="none" stroke="#fff" stroke-width="1.8"/>
</svg>
<svg style="position:absolute;left:330px;top:685px" width="50" height="32" viewBox="330 685 50 32"><path d="M342.80 693.70 L344.92 698.69 L350.31 699.16 L346.22 702.71 L347.44 707.99 L342.80 705.20 L338.16 707.99 L339.38 702.71 L335.29 699.16 L340.68 698.69 Z" fill="none" stroke="#5c9cf5" stroke-width="1.5" stroke-linejoin="round"/><circle cx="367.2" cy="694.7" r="1.15" fill="#5c9cf5"/><circle cx="367.2" cy="701" r="1.15" fill="#5c9cf5"/><circle cx="367.2" cy="707.3" r="1.15" fill="#5c9cf5"/></svg>
<div style="position:absolute;left:27px;top:699.70px;font-size:15px;line-height:15px;color:#fff;font-weight:400;letter-spacing:0.25px;white-space:nowrap;">annotation_project_23rd may</div>
<div style="position:absolute;left:27px;top:720.60px;font-size:13px;line-height:13px;color:#9ca3af;font-weight:400;letter-spacing:0px;white-space:nowrap;">No Description ...</div>
<svg style="position:absolute;left:25px;top:745px" width="30" height="26" viewBox="25 745 30 26">
<rect x="30.75" y="751.75" width="16" height="17" rx="2" fill="none" stroke="#60a5fa" stroke-width="1.5"/>
<path d="M30.75 757 H46.75 M34.5 749 V752 M43.2 749 V752" stroke="#60a5fa" stroke-width="1.5"/>
<rect x="34" y="759.4" width="1.7" height="1.7" fill="#60a5fa"/><rect x="34" y="763.4" width="1.7" height="1.7" fill="#60a5fa"/><rect x="37.9" y="759.4" width="1.7" height="1.7" fill="#60a5fa"/><rect x="37.9" y="763.4" width="1.7" height="1.7" fill="#60a5fa"/><rect x="42" y="759.4" width="1.7" height="1.7" fill="#60a5fa"/><rect x="42" y="763.4" width="1.7" height="1.7" fill="#60a5fa"/></svg>
<div style="position:absolute;left:59.5px;top:751.30px;font-size:15px;line-height:15px;color:#b8bfca;font-weight:400;letter-spacing:0.6px;white-space:nowrap;">15/Apr/2025</div>
<svg style="position:absolute;left:157.0px;top:748px" width="22" height="24" viewBox="157.0 748 22 24">
<path d="M168.0 751.4 L175.4 756.7 L168.0 762 L160.6 756.7 Z" fill="none" stroke="#60a5fa" stroke-width="1.4" stroke-linejoin="round"/>
<path d="M160.2 760.3 L168.0 765.7 L175.8 760.3" fill="none" stroke="#60a5fa" stroke-width="1.4" stroke-linejoin="round"/>
</svg>
<div style="position:absolute;left:188.2px;top:751.30px;font-size:15px;line-height:15px;color:#b8bfca;font-weight:400;letter-spacing:0px;white-space:nowrap;">1</div>
<svg style="position:absolute;left:207.09999999999997px;top:749px" width="22" height="22" viewBox="207.09999999999997 749 22 22">
<circle cx="217.09999999999997" cy="755.3" r="3.1" fill="none" stroke="#60a5fa" stroke-width="1.5"/>
<path d="M209.99999999999997 764.8 C209.99999999999997 761.4 213.09999999999997 760 217.09999999999997 760 C221.09999999999997 760 224.39999999999998 761.4 224.39999999999998 764.8 Q224.39999999999998 765.6 223.59999999999997 765.6 H210.79999999999995 Q209.99999999999997 765.6 209.99999999999997 764.8 Z" fill="none" stroke="#60a5fa" stroke-width="1.5"/>
</svg>
<div style="position:absolute;left:237.89999999999998px;top:751.30px;font-size:15px;line-height:15px;color:#b8bfca;font-weight:400;letter-spacing:0px;white-space:nowrap;">1</div>
<div style="position:absolute;left:404px;top:480px;width:376px;height:330px;background:#0c1c3b;border:1px solid #1a3053;border-radius:2.5px"></div>
<svg style="position:absolute;left:493px;top:506px" width="200" height="150" viewBox="493 506 200 150"><defs><filter id="tx6" x="0" y="0" width="100%" height="100%" color-interpolation-filters="sRGB"><feTurbulence type="fractalNoise" baseFrequency="0.6" numOctaves="2" seed="9" result="n"/><feColorMatrix in="n" type="matrix" values="0.233 0.233 0.233 0 0.150  0.233 0.233 0.233 0 0.150  0.233 0.233 0.233 0 0.150  0 0 0 0 1" result="g"/><feBlend in="g" in2="SourceGraphic" mode="hard-light" result="b"/><feComposite in="b" in2="SourceGraphic" operator="in"/></filter><filter id="tx6b" x="0" y="0" width="100%" height="100%" color-interpolation-filters="sRGB"><feTurbulence type="fractalNoise" baseFrequency="0.12" numOctaves="2" seed="21" result="n"/><feColorMatrix in="n" type="matrix" values="0.233 0.233 0.233 0 0.150  0.233 0.233 0.233 0 0.150  0.233 0.233 0.233 0 0.150  0 0 0 0 1" result="g"/><feBlend in="g" in2="SourceGraphic" mode="hard-light" result="b"/><feComposite in="b" in2="SourceGraphic" operator="in"/></filter><clipPath id="c6"><rect x="495.5" y="508.7" width="195.2" height="143.5"/></clipPath><pattern id="blk6" patternUnits="userSpaceOnUse" width="9" height="6" patternTransform="rotate(44)"><rect width="9" height="6" fill="#958d7a"/><rect x="0.8" y="0.8" width="3.4" height="4.2" fill="#ddd3bd"/><rect x="4.9" y="0.8" width="3.4" height="4.2" fill="#cfc4ac"/></pattern></defs><rect x="493" y="507.7" width="199.8" height="145.5" fill="#0b0b0b"/><g clip-path="url(#c6)"><g filter="url(#tx6b)"><g filter="url(#tx6)"><rect x="495.5" y="508.7" width="195.2" height="143.5" fill="url(#blk6)"/><path d="M515.5 508.7 L660.5 652.7" stroke="#79725f" stroke-width="6.5" opacity="1"/><path d="M495.5 556.7 L549.5 510.7" stroke="#79725f" stroke-width="4.5" opacity="1"/><path d="M600.5 627.7 L691.5 562.7" stroke="#79725f" stroke-width="4.5" opacity="1"/><path d="M567.5 652.7 L600.5 627.7" stroke="#79725f" stroke-width="4.5" opacity="1"/><path d="M496.5 585.7 L565.5 652.7" stroke="#79725f" stroke-width="3.5" opacity="1"/><path d="M656.5 508.7 L691.5 548.7" stroke="#79725f" stroke-width="3.5" opacity="1"/><path d="M555.5 518.7 L685.5 648.7" stroke="#8a8372" stroke-width="1.6" opacity="0.9"/><path d="M495.5 608.7 L605.5 508.7" stroke="#8a8372" stroke-width="1.6" opacity="0.8"/><path d="M535.5 508.7 L495.5 543.7" stroke="#8a8372" stroke-width="1.6" opacity="0.8"/><path d="M615.5 508.7 L691.5 583.7" stroke="#8a8372" stroke-width="1.6" opacity="0.8"/><path d="M525.5 568.7 L595.5 652.7" stroke="#8a8372" stroke-width="1.6" opacity="0.8"/><path d="M590.5 528.7 L655.5 508.7" stroke="#8a8372" stroke-width="1.6" opacity="0.8"/><path d="M495.5 638.7 L535.5 598.7" stroke="#8a8372" stroke-width="1.6" opacity="0.8"/><path d="M635.5 652.7 L691.5 608.7" stroke="#8a8372" stroke-width="1.6" opacity="0.8"/><path d="M575.5 508.7 L691.5 618.7" stroke="#8a8372" stroke-width="1.3" opacity="0.7"/><path d="M495.5 528.7 L615.5 652.7" stroke="#8a8372" stroke-width="1.3" opacity="0.7"/><path d="M510.5 618.7 L595.5 538.7" stroke="#8a8372" stroke-width="1.3" opacity="0.7"/><path d="M625.5 638.7 L691.5 588.7" stroke="#8a8372" stroke-width="1.3" opacity="0.7"/><polygon points="610.5,533.7 630.5,553.7 615.5,568.7 595.5,548.7" fill="#9a927e" opacity="0.7"/><rect x="540.7" y="583.8" width="3.1" height="3.2" fill="#7a7466" transform="rotate(44 540.7 583.8)"/><rect x="508.0" y="510.5" width="4.5" height="2.5" fill="#e8e0cc" transform="rotate(44 508.0 510.5)"/><rect x="531.9" y="607.7" width="3.6" height="3.1" fill="#6f6a5e" transform="rotate(44 531.9 607.7)"/><rect x="616.9" y="529.5" width="3.9" height="3.7" fill="#7a7466" transform="rotate(44 616.9 529.5)"/><rect x="569.6" y="510.8" width="4.3" height="2.3" fill="#7a7466" transform="rotate(44 569.6 510.8)"/><rect x="503.6" y="616.4" width="4.5" height="2.5" fill="#7a7466" transform="rotate(44 503.6 616.4)"/><rect x="632.1" y="630.0" width="4.1" height="3.8" fill="#6f6a5e" transform="rotate(44 632.1 630.0)"/><rect x="633.8" y="588.3" width="4.9" height="2.3" fill="#d9cdb3" transform="rotate(44 633.8 588.3)"/><rect x="514.0" y="527.5" width="2.7" height="3.9" fill="#6f6a5e" transform="rotate(44 514.0 527.5)"/><rect x="643.5" y="626.7" width="3.3" height="3.7" fill="#7a7466" transform="rotate(44 643.5 626.7)"/><rect x="562.2" y="589.4" width="3.8" height="3.8" fill="#efe9dc" transform="rotate(44 562.2 589.4)"/><rect x="658.2" y="645.5" width="4.0" height="2.3" fill="#d9cdb3" transform="rotate(44 658.2 645.5)"/><rect x="678.8" y="633.5" width="3.7" height="3.4" fill="#e8e0cc" transform="rotate(44 678.8 633.5)"/><rect x="615.8" y="645.1" width="2.8" height="2.2" fill="#6f6a5e" transform="rotate(44 615.8 645.1)"/><rect x="657.7" y="645.3" width="2.3" height="3.6" fill="#6f6a5e" transform="rotate(44 657.7 645.3)"/><rect x="665.9" y="511.5" width="3.3" height="2.8" fill="#efe9dc" transform="rotate(44 665.9 511.5)"/><rect x="503.9" y="593.5" width="2.1" height="3.4" fill="#d9cdb3" transform="rotate(44 503.9 593.5)"/><rect x="600.2" y="635.9" width="2.8" height="2.5" fill="#efe9dc" transform="rotate(44 600.2 635.9)"/><rect x="554.3" y="519.3" width="3.8" height="2.1" fill="#e8e0cc" transform="rotate(44 554.3 519.3)"/><rect x="680.1" y="548.9" width="2.8" height="3.4" fill="#d9cdb3" transform="rotate(44 680.1 548.9)"/><rect x="555.1" y="641.0" width="4.7" height="2.8" fill="#6f6a5e" transform="rotate(44 555.1 641.0)"/><rect x="660.8" y="562.0" width="4.6" height="3.4" fill="#efe9dc" transform="rotate(44 660.8 562.0)"/><rect x="613.3" y="638.5" width="3.5" height="2.9" fill="#e8e0cc" transform="rotate(44 613.3 638.5)"/><rect x="673.4" y="569.1" width="2.8" height="2.6" fill="#d9cdb3" transform="rotate(44 673.4 569.1)"/><rect x="497.7" y="566.0" width="3.7" height="2.0" fill="#7a7466" transform="rotate(44 497.7 566.0)"/><rect x="607.4" y="527.1" width="3.9" height="2.7" fill="#d9cdb3" transform="rotate(44 607.4 527.1)"/><rect x="624.6" y="557.4" width="4.1" height="3.5" fill="#efe9dc" transform="rotate(44 624.6 557.4)"/><rect x="607.5" y="640.5" width="2.1" height="2.7" fill="#6f6a5e" transform="rotate(44 607.5 640.5)"/><rect x="552.2" y="591.7" width="2.5" height="2.4" fill="#d9cdb3" transform="rotate(44 552.2 591.7)"/><rect x="655.8" y="545.2" width="4.4" height="2.2" fill="#efe9dc" transform="rotate(44 655.8 545.2)"/><rect x="680.1" y="603.1" width="2.4" height="3.0" fill="#d9cdb3" transform="rotate(44 680.1 603.1)"/><rect x="540.9" y="534.6" width="3.3" height="3.4" fill="#efe9dc" transform="rotate(44 540.9 534.6)"/><rect x="609.6" y="639.7" width="4.0" height="2.4" fill="#e8e0cc" transform="rotate(44 609.6 639.7)"/><rect x="510.7" y="611.1" width="2.7" height="3.1" fill="#d9cdb3" transform="rotate(44 510.7 611.1)"/><rect x="538.3" y="525.4" width="3.6" height="2.4" fill="#7a7466" transform="rotate(44 538.3 525.4)"/><rect x="530.4" y="547.1" width="4.4" height="3.3" fill="#7a7466" transform="rotate(44 530.4 547.1)"/><rect x="561.1" y="526.6" width="2.9" height="3.6" fill="#d9cdb3" transform="rotate(44 561.1 526.6)"/><rect x="583.8" y="596.2" width="2.9" height="3.1" fill="#efe9dc" transform="rotate(44 583.8 596.2)"/><rect x="670.4" y="530.2" width="2.0" height="3.9" fill="#7a7466" transform="rotate(44 670.4 530.2)"/><rect x="683.0" y="568.6" width="4.9" height="3.9" fill="#e8e0cc" transform="rotate(44 683.0 568.6)"/><rect x="501.6" y="571.7" width="4.3" height="3.5" fill="#d9cdb3" transform="rotate(44 501.6 571.7)"/><rect x="598.8" y="631.5" width="4.6" height="3.7" fill="#d9cdb3" transform="rotate(44 598.8 631.5)"/><rect x="518.3" y="542.4" width="2.1" height="3.6" fill="#7a7466" transform="rotate(44 518.3 542.4)"/><rect x="671.0" y="632.4" width="4.7" height="3.2" fill="#efe9dc" transform="rotate(44 671.0 632.4)"/><rect x="586.9" y="525.4" width="3.5" height="2.5" fill="#efe9dc" transform="rotate(44 586.9 525.4)"/></g></g><rect x="598.5" y="623.7" width="9" height="7" fill="#eee" transform="rotate(-35 602.5 627.7)"/><rect x="615.5" y="608.7" width="7" height="5" fill="#eee" transform="rotate(-35 618.5 611.7)"/><rect x="613.5" y="548.7" width="6" height="6" fill="#eee"/><rect x="607.5" y="534.7" width="5" height="5" fill="#e8e2d2"/><rect x="675.5" y="618.7" width="6" height="8" fill="#e8e2d2"/></g></svg>
<svg style="position:absolute;left:404px;top:650px" width="70" height="30" viewBox="404 650 70 30">
<circle cx="422" cy="664" r="9" fill="none" stroke="#fff" stroke-width="2"/>
<path d="M425.8 664 H418.8 M421.8 661 L418.8 664 L421.8 667" fill="none" stroke="#fff" stroke-width="1.8"/>
<circle cx="456" cy="664" r="9" fill="none" stroke="#fff" stroke-width="2"/>
<path d="M452.2 664 H459.2 M456.2 661 L459.2 664 L456.2 667" fill="none" stroke="#fff" stroke-width="1.8"/>
</svg>
<svg style="position:absolute;left:724px;top:685px" width="50" height="32" viewBox="724 685 50 32"><path d="M736.80 693.70 L738.92 698.69 L744.31 699.16 L740.22 702.71 L741.44 707.99 L736.80 705.20 L732.16 707.99 L733.38 702.71 L729.29 699.16 L734.68 698.69 Z" fill="none" stroke="#5c9cf5" stroke-width="1.5" stroke-linejoin="round"/><circle cx="761.2" cy="694.7" r="1.15" fill="#5c9cf5"/><circle cx="761.2" cy="701" r="1.15" fill="#5c9cf5"/><circle cx="761.2" cy="707.3" r="1.15" fill="#5c9cf5"/></svg>
<div style="position:absolute;left:421px;top:699.70px;font-size:15px;line-height:15px;color:#fff;font-weight:400;letter-spacing:0.28px;white-space:nowrap;">annotation_project_hk</div>
<div style="position:absolute;left:421px;top:720.60px;font-size:13px;line-height:13px;color:#9ca3af;font-weight:400;letter-spacing:0px;white-space:nowrap;">testing</div>
<svg style="position:absolute;left:419px;top:745px" width="30" height="26" viewBox="419 745 30 26">
<rect x="424.75" y="751.75" width="16" height="17" rx="2" fill="none" stroke="#60a5fa" stroke-width="1.5"/>
<path d="M424.75 757 H440.75 M428.5 749 V752 M437.2 749 V752" stroke="#60a5fa" stroke-width="1.5"/>
<rect x="428" y="759.4" width="1.7" height="1.7" fill="#60a5fa"/><rect x="428" y="763.4" width="1.7" height="1.7" fill="#60a5fa"/><rect x="431.9" y="759.4" width="1.7" height="1.7" fill="#60a5fa"/><rect x="431.9" y="763.4" width="1.7" height="1.7" fill="#60a5fa"/><rect x="436" y="759.4" width="1.7" height="1.7" fill="#60a5fa"/><rect x="436" y="763.4" width="1.7" height="1.7" fill="#60a5fa"/></svg>
<div style="position:absolute;left:453.5px;top:751.30px;font-size:15px;line-height:15px;color:#b8bfca;font-weight:400;letter-spacing:0.6px;white-space:nowrap;">14/Apr/2025</div>
<svg style="position:absolute;left:551.0px;top:748px" width="22" height="24" viewBox="551.0 748 22 24">
<path d="M562.0 751.4 L569.4 756.7 L562.0 762 L554.6 756.7 Z" fill="none" stroke="#60a5fa" stroke-width="1.4" stroke-linejoin="round"/>
<path d="M554.2 760.3 L562.0 765.7 L569.8 760.3" fill="none" stroke="#60a5fa" stroke-width="1.4" stroke-linejoin="round"/>
</svg>
<div style="position:absolute;left:582.2px;top:751.30px;font-size:15px;line-height:15px;color:#b8bfca;font-weight:400;letter-spacing:0px;white-space:nowrap;">8</div>
<svg style="position:absolute;left:601.1000000000001px;top:749px" width="22" height="22" viewBox="601.1000000000001 749 22 22">
<circle cx="611.1000000000001" cy="755.3" r="3.1" fill="none" stroke="#60a5fa" stroke-width="1.5"/>
<path d="M604.0000000000001 764.8 C604.0000000000001 761.4 607.1000000000001 760 611.1000000000001 760 C615.1000000000001 760 618.4000000000001 761.4 618.4000000000001 764.8 Q618.4000000000001 765.6 617.6000000000001 765.6 H604.8000000000002 Q604.0000000000001 765.6 604.0000000000001 764.8 Z" fill="none" stroke="#60a5fa" stroke-width="1.5"/>
</svg>
<div style="position:absolute;left:631.9000000000001px;top:751.30px;font-size:15px;line-height:15px;color:#b8bfca;font-weight:400;letter-spacing:0px;white-space:nowrap;">6</div>
<div style="position:absolute;left:798px;top:480px;width:376px;height:330px;background:#0c1c3b;border:1px solid #1a3053;border-radius:2.5px"></div>
<svg style="position:absolute;left:887px;top:494px" width="200" height="174" viewBox="887 494 200 174"><defs><filter id="tx7" x="0" y="0" width="100%" height="100%" color-interpolation-filters="sRGB"><feTurbulence type="fractalNoise" baseFrequency="0.5" numOctaves="3" seed="2" result="n"/><feColorMatrix in="n" type="matrix" values="0.073 0.073 0.073 0 0.390  0.073 0.073 0.073 0 0.390  0.073 0.073 0.073 0 0.390  0 0 0 0 1" result="g"/><feBlend in="g" in2="SourceGraphic" mode="hard-light" result="b"/><feComposite in="b" in2="SourceGraphic" operator="in"/></filter><filter id="bl7" x="-20%" y="-20%" width="140%" height="140%"><feGaussianBlur stdDeviation="0.8"/></filter></defs><g filter="url(#tx7)"><rect x="887" y="494" width="200" height="174" fill="#d9c49d"/><polygon points="957,512 982,522 987,544 1002,564 957,589 907,604 932,549" fill="#e0cfae" opacity="0.75"/><polygon points="999,512 1047,509 1087,534 1082,566 1037,564" fill="#e0cdab" opacity="0.6"/><ellipse cx="997" cy="602" rx="55" ry="33" fill="none" stroke="#cbb58e" stroke-width="1"/><ellipse cx="997" cy="602" rx="35" ry="18" fill="none" stroke="#cdb893" stroke-width="0.8"/><path d="M907 604 L1007 569" stroke="#cbb58e" stroke-width="1"/><path d="M1043 494 L1067 663" stroke="#b3a993" stroke-width="1.8"/><path d="M903 663 L1086.5 649" stroke="#c0b8a6" stroke-width="1.5"/><path d="M901 628 L942 659" stroke="#c4bcab" stroke-width="3"/><path d="M927 642 L933 634 L942 638" stroke="#b9b09c" stroke-width="4" fill="none"/><polygon points="921,557 945,557 942,566 927,569 912,586" fill="#b2aa97" opacity="0.85"/><rect x="1048" y="570" width="22" height="9" fill="#aaa493" opacity="0.85"/><rect x="1045" y="638" width="14" height="10" fill="#aaa493" opacity="0.8"/><rect x="1008" y="573" width="9" height="6" fill="#bdb39c" opacity="0.8"/></g><g filter="url(#bl7)"><ellipse cx="1053.368705084669" cy="580.0" rx="1.9417869892607293" ry="3.192790348348545" fill="#3d3a30" opacity="0.9"/><ellipse cx="1055.173504697485" cy="585.3076923076923" rx="1.9398985747399307" ry="3.3834874949981257" fill="#3d3a30" opacity="0.9"/><ellipse cx="1053.2793233771586" cy="590.6153846153846" rx="1.6656226543781054" ry="3.4150350754974705" fill="#3d3a30" opacity="0.9"/><ellipse cx="1055.9853851978723" cy="595.9230769230769" rx="2.1009004917506227" ry="2.1698089469797166" fill="#3d3a30" opacity="0.9"/><ellipse cx="1056.2918225279618" cy="601.2307692307693" rx="1.4465728326198304" ry="2.8156412888538958" fill="#3d3a30" opacity="0.9"/><ellipse cx="1057.4525927945535" cy="606.5384615384615" rx="1.2131141895889022" ry="2.325094700695772" fill="#3d3a30" opacity="0.9"/><ellipse cx="1057.4153701749565" cy="611.8461538461538" rx="2.116345371808552" ry="3.1485881774437123" fill="#3d3a30" opacity="0.9"/><ellipse cx="1057.9018895601512" cy="617.1538461538462" rx="1.9971469914312046" ry="2.208151127598355" fill="#3d3a30" opacity="0.9"/><ellipse cx="1060.121588330629" cy="622.4615384615385" rx="1.3266992325502698" ry="2.002662293303802" fill="#3d3a30" opacity="0.9"/><ellipse cx="1061.7295988495575" cy="627.7692307692307" rx="1.4094563824951178" ry="2.3232217538370983" fill="#3d3a30" opacity="0.9"/><ellipse cx="1062.9088017880163" cy="633.0769230769231" rx="2.072407765436802" ry="2.43395775162039" fill="#3d3a30" opacity="0.9"/><ellipse cx="1063.6921262745425" cy="638.3846153846154" rx="1.7392234688708106" ry="3.0167457158758886" fill="#3d3a30" opacity="0.9"/><ellipse cx="1062.2681846974476" cy="643.6923076923076" rx="2.1409760010879992" ry="3.0359629116603624" fill="#3d3a30" opacity="0.9"/><ellipse cx="1065.3996929369516" cy="649.0" rx="2.0937416775764786" ry="2.4481833467808016" fill="#3d3a30" opacity="0.9"/><ellipse cx="1057" cy="578" rx="6" ry="3.5" fill="#3d3a30" opacity="1"/><ellipse cx="1067" cy="574" rx="3" ry="2" fill="#3d3a30" opacity="1"/><ellipse cx="1063" cy="584" rx="4" ry="2.2" fill="#3d3a30" opacity="1"/><ellipse cx="912.4" cy="594.8" rx="4.2" ry="3.3" fill="#141410" opacity="1"/><ellipse cx="909" cy="582" rx="1.5" ry="2.5" fill="#4a4a44" opacity="1"/><ellipse cx="925" cy="560" rx="3" ry="2" fill="#4a463c" opacity="1"/><ellipse cx="933" cy="559" rx="2.5" ry="2" fill="#4a463c" opacity="1"/><ellipse cx="940" cy="558" rx="2.5" ry="1.8" fill="#4a463c" opacity="1"/></g></svg>
<svg style="position:absolute;left:798px;top:650px" width="70" height="30" viewBox="798 650 70 30">
<circle cx="816" cy="664" r="9" fill="none" stroke="#fff" stroke-width="2"/>
<path d="M819.8 664 H812.8 M815.8 661 L812.8 664 L815.8 667" fill="none" stroke="#fff" stroke-width="1.8"/>
<circle cx="850" cy="664" r="9" fill="none" stroke="#fff" stroke-width="2"/>
<path d="M846.2 664 H853.2 M850.2 661 L853.2 664 L850.2 667" fill="none" stroke="#fff" stroke-width="1.8"/>
</svg>
<svg style="position:absolute;left:1118px;top:685px" width="50" height="32" viewBox="1118 685 50 32"><path d="M1130.80 693.70 L1132.92 698.69 L1138.31 699.16 L1134.22 702.71 L1135.44 707.99 L1130.80 705.20 L1126.16 707.99 L1127.38 702.71 L1123.29 699.16 L1128.68 698.69 Z" fill="none" stroke="#5c9cf5" stroke-width="1.5" stroke-linejoin="round"/><circle cx="1155.2" cy="694.7" r="1.15" fill="#5c9cf5"/><circle cx="1155.2" cy="701" r="1.15" fill="#5c9cf5"/><circle cx="1155.2" cy="707.3" r="1.15" fill="#5c9cf5"/></svg>
<div style="position:absolute;left:815px;top:699.70px;font-size:15px;line-height:15px;color:#fff;font-weight:400;letter-spacing:0.28px;white-space:nowrap;">s300_new</div>
<div style="position:absolute;left:815px;top:720.60px;font-size:13px;line-height:13px;color:#9ca3af;font-weight:400;letter-spacing:0px;white-space:nowrap;">No Description ...</div>
<svg style="position:absolute;left:813px;top:745px" width="30" height="26" viewBox="813 745 30 26">
<rect x="818.75" y="751.75" width="16" height="17" rx="2" fill="none" stroke="#60a5fa" stroke-width="1.5"/>
<path d="M818.75 757 H834.75 M822.5 749 V752 M831.2 749 V752" stroke="#60a5fa" stroke-width="1.5"/>
<rect x="822" y="759.4" width="1.7" height="1.7" fill="#60a5fa"/><rect x="822" y="763.4" width="1.7" height="1.7" fill="#60a5fa"/><rect x="825.9" y="759.4" width="1.7" height="1.7" fill="#60a5fa"/><rect x="825.9" y="763.4" width="1.7" height="1.7" fill="#60a5fa"/><rect x="830" y="759.4" width="1.7" height="1.7" fill="#60a5fa"/><rect x="830" y="763.4" width="1.7" height="1.7" fill="#60a5fa"/></svg>
<div style="position:absolute;left:847.5px;top:751.30px;font-size:15px;line-height:15px;color:#b8bfca;font-weight:400;letter-spacing:0.6px;white-space:nowrap;">26/Mar/2025</div>
<svg style="position:absolute;left:948.0px;top:748px" width="22" height="24" viewBox="948.0 748 22 24">
<path d="M959.0 751.4 L966.4 756.7 L959.0 762 L951.6 756.7 Z" fill="none" stroke="#60a5fa" stroke-width="1.4" stroke-linejoin="round"/>
<path d="M951.2 760.3 L959.0 765.7 L966.8 760.3" fill="none" stroke="#60a5fa" stroke-width="1.4" stroke-linejoin="round"/>
</svg>
<div style="position:absolute;left:979.2px;top:751.30px;font-size:15px;line-height:15px;color:#b8bfca;font-weight:400;letter-spacing:0px;white-space:nowrap;">8</div>
<svg style="position:absolute;left:998.1000000000001px;top:749px" width="22" height="22" viewBox="998.1000000000001 749 22 22">
<circle cx="1008.1000000000001" cy="755.3" r="3.1" fill="none" stroke="#60a5fa" stroke-width="1.5"/>
<path d="M1001.0000000000001 764.8 C1001.0000000000001 761.4 1004.1000000000001 760 1008.1000000000001 760 C1012.1000000000001 760 1015.4000000000001 761.4 1015.4000000000001 764.8 Q1015.4000000000001 765.6 1014.6000000000001 765.6 H1001.8000000000002 Q1001.0000000000001 765.6 1001.0000000000001 764.8 Z" fill="none" stroke="#60a5fa" stroke-width="1.5"/>
</svg>
<div style="position:absolute;left:1028.9px;top:751.30px;font-size:15px;line-height:15px;color:#b8bfca;font-weight:400;letter-spacing:0px;white-space:nowrap;">4</div>
<div style="position:absolute;left:1192px;top:480px;width:376px;height:330px;background:#0c1c3b;border:1px solid #1a3053;border-radius:2.5px"></div>
<svg style="position:absolute;left:1355px;top:480px" width="130" height="205" viewBox="1355 480 130 205"><defs><clipPath id="q8"><polygon points="1401.8,484.5 1480.7,485.8 1476.8,679.9 1360.4,677.3"/></clipPath><filter id="cl8" x="0" y="0" width="100%" height="100%" color-interpolation-filters="sRGB"><feTurbulence type="fractalNoise" baseFrequency="0.07 0.05" numOctaves="4" seed="4"/><feColorMatrix type="matrix" values="0 0 0 0 0.47  0 0 0 0 0.43  0 0 0 0 0.39  2.3 0 0 0 -0.95"/><feComposite in2="SourceGraphic" operator="in"/></filter><filter id="hl8" x="-50%" y="-50%" width="200%" height="200%" color-interpolation-filters="sRGB"><feGaussianBlur stdDeviation="1.8" result="b"/><feTurbulence type="fractalNoise" baseFrequency="0.35" numOctaves="2" seed="8" result="n"/><feColorMatrix in="n" type="matrix" values="0 0 0 0 1  0 0 0 0 1  0 0 0 0 1  1.8 0 0 0 -0.2" result="na"/><feComposite in="b" in2="na" operator="in"/></filter><radialGradient id="cg8" cx="0.5" cy="0.5" r="0.5"><stop offset="0" stop-color="#6a6056" stop-opacity="0.55"/><stop offset="1" stop-color="#6a6056" stop-opacity="0"/></radialGradient><filter id="tx8" x="0" y="0" width="100%" height="100%" color-interpolation-filters="sRGB"><feTurbulence type="fractalNoise" baseFrequency="0.5" numOctaves="3" seed="6" result="n"/><feColorMatrix in="n" type="matrix" values="0.067 0.067 0.067 0 0.400  0.067 0.067 0.067 0 0.400  0.067 0.067 0.067 0 0.400  0 0 0 0 1" result="g"/><feBlend in="g" in2="SourceGraphic" mode="hard-light" result="b"/><feComposite in="b" in2="SourceGraphic" operator="in"/></filter></defs><g clip-path="url(#q8)"><g filter="url(#tx8)"><rect x="1355" y="480" width="130" height="205" fill="#2a241f"/><ellipse cx="1435" cy="600" rx="45" ry="60" fill="url(#cg8)"/><ellipse cx="1430" cy="530" rx="35" ry="40" fill="url(#cg8)"/><rect x="1355" y="480" width="130" height="205" fill="#fff" filter="url(#cl8)"/><g filter="url(#hl8)" opacity="0.85"><ellipse cx="1415.7" cy="509" rx="4" ry="9" fill="#e2dbd0" transform="rotate(35 1415.7 509)"/><ellipse cx="1453" cy="512" rx="3.5" ry="11" fill="#e2dbd0" transform="rotate(10 1453 512)"/><ellipse cx="1431" cy="525.5" rx="4" ry="8" fill="#e2dbd0" transform="rotate(40 1431 525.5)"/><ellipse cx="1418" cy="541" rx="3.5" ry="9" fill="#e2dbd0" transform="rotate(25 1418 541)"/><ellipse cx="1413" cy="556" rx="3" ry="7" fill="#e2dbd0" transform="rotate(15 1413 556)"/><ellipse cx="1393" cy="546" rx="2.5" ry="7" fill="#e2dbd0" transform="rotate(10 1393 546)"/><ellipse cx="1476" cy="520.5" rx="2.5" ry="6" fill="#e2dbd0" transform="rotate(0 1476 520.5)"/><ellipse cx="1443.5" cy="571" rx="7" ry="4.5" fill="#e2dbd0" transform="rotate(-20 1443.5 571)"/><ellipse cx="1433.4" cy="586" rx="4" ry="7" fill="#e2dbd0" transform="rotate(20 1433.4 586)"/><ellipse cx="1423" cy="599" rx="4" ry="8" fill="#e2dbd0" transform="rotate(10 1423 599)"/><ellipse cx="1471.3" cy="594" rx="5" ry="7" fill="#e2dbd0" transform="rotate(0 1471.3 594)"/><ellipse cx="1438.5" cy="621.6" rx="7" ry="4" fill="#e2dbd0" transform="rotate(-15 1438.5 621.6)"/><ellipse cx="1466" cy="611.5" rx="5" ry="4" fill="#e2dbd0" transform="rotate(0 1466 611.5)"/><ellipse cx="1420.8" cy="631.7" rx="5" ry="4" fill="#e2dbd0" transform="rotate(0 1420.8 631.7)"/><ellipse cx="1468.8" cy="657" rx="3" ry="6" fill="#e2dbd0" transform="rotate(0 1468.8 657)"/><ellipse cx="1455" cy="585" rx="4" ry="4" fill="#e2dbd0" transform="rotate(0 1455 585)"/></g></g></g></svg>
<svg style="position:absolute;left:1192px;top:650px" width="70" height="30" viewBox="1192 650 70 30">
<circle cx="1210" cy="664" r="9" fill="none" stroke="#fff" stroke-width="2"/>
<path d="M1213.8 664 H1206.8 M1209.8 661 L1206.8 664 L1209.8 667" fill="none" stroke="#fff" stroke-width="1.8"/>
<circle cx="1244" cy="664" r="9" fill="none" stroke="#fff" stroke-width="2"/>
<path d="M1240.2 664 H1247.2 M1244.2 661 L1247.2 664 L1244.2 667" fill="none" stroke="#fff" stroke-width="1.8"/>
</svg>
<svg style="position:absolute;left:1512px;top:685px" width="50" height="32" viewBox="1512 685 50 32"><path d="M1524.80 693.70 L1526.92 698.69 L1532.31 699.16 L1528.22 702.71 L1529.44 707.99 L1524.80 705.20 L1520.16 707.99 L1521.38 702.71 L1517.29 699.16 L1522.68 698.69 Z" fill="none" stroke="#5c9cf5" stroke-width="1.5" stroke-linejoin="round"/><circle cx="1549.2" cy="694.7" r="1.15" fill="#5c9cf5"/><circle cx="1549.2" cy="701" r="1.15" fill="#5c9cf5"/><circle cx="1549.2" cy="707.3" r="1.15" fill="#5c9cf5"/></svg>
<div style="position:absolute;left:1209px;top:699.70px;font-size:15px;line-height:15px;color:#fff;font-weight:400;letter-spacing:0.2px;white-space:nowrap;">annotation_project_sg</div>
<div style="position:absolute;left:1209px;top:720.60px;font-size:13px;line-height:13px;color:#9ca3af;font-weight:400;letter-spacing:0px;white-space:nowrap;">No Description ...</div>
<svg style="position:absolute;left:1207px;top:745px" width="30" height="26" viewBox="1207 745 30 26">
<rect x="1212.75" y="751.75" width="16" height="17" rx="2" fill="none" stroke="#60a5fa" stroke-width="1.5"/>
<path d="M1212.75 757 H1228.75 M1216.5 749 V752 M1225.2 749 V752" stroke="#60a5fa" stroke-width="1.5"/>
<rect x="1216" y="759.4" width="1.7" height="1.7" fill="#60a5fa"/><rect x="1216" y="763.4" width="1.7" height="1.7" fill="#60a5fa"/><rect x="1219.9" y="759.4" width="1.7" height="1.7" fill="#60a5fa"/><rect x="1219.9" y="763.4" width="1.7" height="1.7" fill="#60a5fa"/><rect x="1224" y="759.4" width="1.7" height="1.7" fill="#60a5fa"/><rect x="1224" y="763.4" width="1.7" height="1.7" fill="#60a5fa"/></svg>
<div style="position:absolute;left:1241.5px;top:751.30px;font-size:15px;line-height:15px;color:#b8bfca;font-weight:400;letter-spacing:0.6px;white-space:nowrap;">03/Mar/2025</div>
<svg style="position:absolute;left:1342.0px;top:748px" width="22" height="24" viewBox="1342.0 748 22 24">
<path d="M1353.0 751.4 L1360.4 756.7 L1353.0 762 L1345.6 756.7 Z" fill="none" stroke="#60a5fa" stroke-width="1.4" stroke-linejoin="round"/>
<path d="M1345.2 760.3 L1353.0 765.7 L1360.8 760.3" fill="none" stroke="#60a5fa" stroke-width="1.4" stroke-linejoin="round"/>
</svg>
<div style="position:absolute;left:1373.2px;top:751.30px;font-size:15px;line-height:15px;color:#b8bfca;font-weight:400;letter-spacing:0px;white-space:nowrap;">4</div>
<svg style="position:absolute;left:1392.1000000000001px;top:749px" width="22" height="22" viewBox="1392.1000000000001 749 22 22">
<circle cx="1402.1000000000001" cy="755.3" r="3.1" fill="none" stroke="#60a5fa" stroke-width="1.5"/>
<path d="M1395.0000000000002 764.8 C1395.0000000000002 761.4 1398.1000000000001 760 1402.1000000000001 760 C1406.1000000000001 760 1409.4 761.4 1409.4 764.8 Q1409.4 765.6 1408.6000000000001 765.6 H1395.8000000000002 Q1395.0000000000002 765.6 1395.0000000000002 764.8 Z" fill="none" stroke="#60a5fa" stroke-width="1.5"/>
</svg>
<div style="position:absolute;left:1422.9px;top:751.30px;font-size:15px;line-height:15px;color:#b8bfca;font-weight:400;letter-spacing:0px;white-space:nowrap;">2</div>
</body></html>
